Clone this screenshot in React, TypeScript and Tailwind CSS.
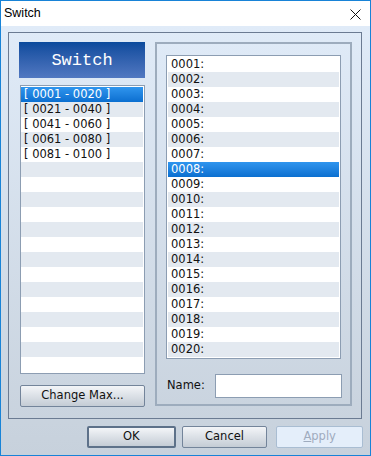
const ranges = [
  "[ 0001 - 0020 ]",
  "[ 0021 - 0040 ]",
  "[ 0041 - 0060 ]",
  "[ 0061 - 0080 ]",
  "[ 0081 - 0100 ]",
];

const switches = Array.from({ length: 20 }, (_, i) => String(i + 1).padStart(4, "0") + ":");

function ListRow({ label, index, selected }: { label: string; index: number; selected: boolean }) {
  let tone = index % 2 === 1 ? "bg-[#e3e9f0] text-[#111]" : "bg-white text-[#111]";
  if (selected) tone = "bg-linear-to-b from-[#2f95ee] to-[#0a6fd0] text-white";
  return (
    <div className={`h-[15px] leading-[15px] pl-[3px] whitespace-nowrap ${tone}`}>{label}</div>
  );
}

function Button({ children, className }: { children: React.ReactNode; className: string }) {
  return (
    <button
      className={`h-[22px] flex items-center justify-center rounded-[2px] bg-linear-to-b from-[#f3f5f8] to-[#c4ccd5] text-[#111] ${className}`}
    >
      {children}
    </button>
  );
}

export default function App() {
  return (
    <div className="w-[371px] h-[456px] border border-[#1883d7] flex flex-col bg-white font-['DejaVu_Sans',sans-serif] text-[11.5px] text-[#111]">
      {/* Title bar */}
      <div className="h-[25px] flex items-center justify-between pl-[3px] pr-[9px] bg-white">
        <span className="font-['Liberation_Sans',sans-serif] text-[12.5px] text-black">Switch</span>
        <svg width="11" height="11" viewBox="0 0 11 11" className="mt-px">
          <path d="M0.5 0.5 L10.5 10.5 M10.5 0.5 L0.5 10.5" stroke="#111" strokeWidth="1" />
        </svg>
      </div>

      {/* Body */}
      <div className="flex-1 bg-linear-to-b from-[#e0ebf8] to-[#c7d1dc] pt-[6px] px-[7px]">
        <div className="w-[354px] h-[387px] border border-[#6b7b92] flex pt-[9px] pl-[10px]">
          {/* Left column */}
          <div className="w-[126px] flex flex-col">
            <div className="h-[36px] flex items-center justify-center bg-linear-to-b from-[#0a4b9d] to-[#5178c1]">
              <span className="font-['Liberation_Mono',monospace] text-[17px] text-white mt-px">Switch</span>
            </div>
            <div className="mt-[7px] ml-px w-[125px] h-[289px] border border-[#8c9db2] bg-white py-px pr-px">
              {Array.from({ length: 19 }, (_, i) => (
                <ListRow key={i} label={ranges[i] ?? ""} index={i} selected={i === 0} />
              ))}
            </div>
            <Button className="mt-[11px] ml-px w-[125px] h-[21px] border border-[#73849a]">Change Max...</Button>
          </div>

          {/* Right group */}
          <div className="ml-[10px] w-[197px] h-[364px] border-2 border-[#9dacbd] flex flex-col">
            <div className="mt-[11px] ml-[9px] w-[175px] h-[304px] border border-[#8c9db2] bg-white p-px">
              {switches.map((s, i) => (
                <ListRow key={s} label={s} index={i} selected={i === 7} />
              ))}
            </div>
            <div className="mt-[15px] flex items-center pl-[10px]">
              <span className="w-[48px]">Name:</span>
              <div className="w-[127px] h-[24px] border border-[#8c9db2] bg-white" />
            </div>
          </div>
        </div>

        {/* Dialog buttons */}
        <div className="mt-[7px] flex">
          <Button className="ml-[79px] w-[89px] border-2 border-[#5d7189]">OK</Button>
          <Button className="ml-[6px] w-[86px] border border-[#73849a]">Cancel</Button>
          <button className="ml-[9px] w-[87px] h-[22px] rounded-[2px] border border-[#a9bdd2] bg-[#e4eefa] text-[#9fabbe] flex items-center justify-center">
            <span className="underline">A</span>pply
          </button>
        </div>
      </div>
    </div>
  );
}
